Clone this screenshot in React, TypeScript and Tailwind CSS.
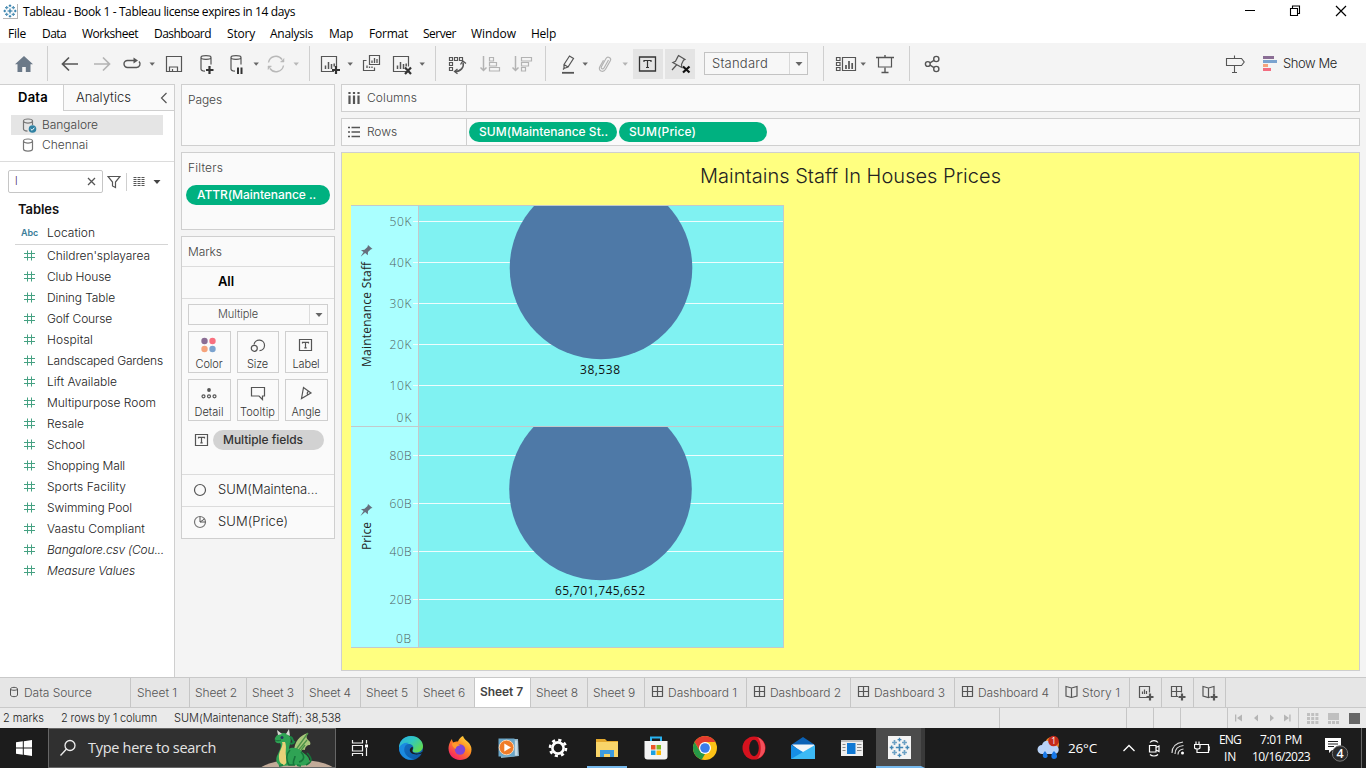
import React, { useLayoutEffect, useRef, useState } from "react";

/* Text set to a given width by adjusting its letter spacing. */
function Fit({ w, className = "", children }: { w: number; className?: string; children: string }) {
  const ref = useRef<HTMLSpanElement>(null);
  const [ls, setLs] = useState(0);
  useLayoutEffect(() => {
    if (!ref.current) return;
    const natural = ref.current.getBoundingClientRect().width - ls * children.length;
    setLs((w - natural) / children.length);
  }, [w, children]);
  return (
    <span ref={ref} className={"inline-block shrink-0 whitespace-pre " + className} style={{ letterSpacing: ls }}>
      {children}
    </span>
  );
}

type SvgProps = { w?: number; h?: number; className?: string; children: React.ReactNode };
function Svg({ w = 24, h = 24, className = "", children }: SvgProps) {
  return (
    <svg width={w} height={h} viewBox={`0 0 ${w} ${h}`} fill="none" stroke="#555" strokeWidth={1.2} className={"block shrink-0 " + className}>
      {children}
    </svg>
  );
}

function Caret({ className = "", color = "#666", big = false }: { className?: string; color?: string; big?: boolean }) {
  return (
    <svg width={8} height={8} viewBox="0 0 8 8" className={"block shrink-0 " + className}>
      <path d={big ? "M.5 2h7L4 6z" : "M1.5 2.5h5.4L4.2 5.7z"} fill={color} />
    </svg>
  );
}

const Divider = ({ className = "" }: { className?: string }) => <div className={"h-[35px] w-px shrink-0 bg-[#cfcfcf] " + className} />;

function TableauMark({ size, color }: { size: number; color: string }) {
  const plus = (x: number, y: number, r: number, w: number, o = 1) => (
    <path key={`${x}-${y}`} d={`M${x - r} ${y}h${2 * r}M${x} ${y - r}v${2 * r}`} strokeWidth={w} opacity={o} />
  );
  return (
    <svg width={size} height={size} viewBox="0 0 24 24" fill="none" stroke={color} className="block">
      {plus(12, 12, 4.2, 1.9)}
      {plus(12, 3, 2.2, 1.6)}
      {plus(12, 21, 2.2, 1.6)}
      {plus(3, 12, 2.2, 1.6)}
      {plus(21, 12, 2.2, 1.6)}
      {plus(6.3, 6.3, 2.8, 1.9, 0.75)}
      {plus(17.7, 6.3, 2.8, 1.9, 0.75)}
      {plus(6.3, 17.7, 2.8, 1.9, 0.75)}
      {plus(17.7, 17.7, 2.8, 1.9, 0.75)}
    </svg>
  );
}

function TitleBar() {
  return (
    <header className="flex h-[22px] shrink-0 items-center bg-white font-['Open_Sans','Noto_Sans',sans-serif] text-[12px] font-normal text-black">
      <div className="ml-[3px] flex h-[15px] w-[15px] items-center justify-center border-r border-b border-[#b5b5b5]">
        <TableauMark size={14} color="#1b6f9f" />
      </div>
      <Fit w={272} className="ml-[5px] pt-[2px]">Tableau - Book 1 - Tableau license expires in 14 days</Fit>
      <Svg w={102} h={20} className="mr-[19px] ml-auto">
        <path d="M0 9.500h10" stroke="#000" strokeWidth={1} />
        <path d="M45.500 7.500h7v7h-7zM47.500 7v-2h7v7.500h-2" stroke="#000" strokeWidth={1.1} />
        <path d="M91 5l10 10M101 5l-10 10" stroke="#000" strokeWidth={1.2} />
      </Svg>
    </header>
  );
}

function MenuBar() {
  return (
    <nav className="flex h-[21px] shrink-0 items-center bg-white pt-[2px] pl-[8px] font-['Open_Sans','Noto_Sans',sans-serif] text-[12px] font-normal text-black">
      <Fit w={18}>File</Fit>
      <Fit w={24} className="ml-[16px]">Data</Fit>
      <Fit w={56} className="ml-[16px]">Worksheet</Fit>
      <Fit w={57} className="ml-[16px]">Dashboard</Fit>
      <Fit w={28} className="ml-[16px]">Story</Fit>
      <Fit w={43} className="ml-[15px]">Analysis</Fit>
      <Fit w={24} className="ml-[16px]">Map</Fit>
      <Fit w={39} className="ml-[16px]">Format</Fit>
      <Fit w={33} className="ml-[15px]">Server</Fit>
      <Fit w={45} className="ml-[15px]">Window</Fit>
      <Fit w={25} className="ml-[15px]">Help</Fit>
    </nav>
  );
}

const Cylinder = () => <path d="M7 5.500c0-2.400 10-2.400 10 0s-10 2.400-10 0v11.500c0 1.200 1.500 2 4 2.200M17 5.500v7" />;
const ChartBox = () => (
  <>
    <path d="M16 19.500H3.500v-15h15v10" />
    <path d="M7.500 17v-3.500M10.500 17v-7M13.500 17v-5M16.200 14.500v-3" strokeWidth={1.5} />
  </>
);

function Toolbar() {
  return (
    <div className="flex h-[41px] shrink-0 items-center bg-[#f4f4f4]">
      <Svg className="ml-[12px]">
        <path d="M12 4l9 8.300h-2.500V20h-4.700v-5h-3.600v5H5.500v-7.700H3z" fill="#6b7988" stroke="none" />
      </Svg>
      <Divider className="ml-[11px]" />
      <Svg className="ml-[10px]">
        <path d="M20 12H5M11 5.500L4.500 12l6.500 6.500" strokeWidth={1.7} />
      </Svg>
      <Svg className="ml-[8px]">
        <path d="M4 12h15M13 5.500l6.500 6.500-6.500 6.500" stroke="#b3b3b3" strokeWidth={1.7} />
      </Svg>
      <Svg className="ml-[6px]">
        <path d="M14 8.500H7.500a3.500 3.500 0 000 7h9a3.500 3.500 0 002.500-6" strokeWidth={1.4} />
        <path d="M13.500 5.500L18 8.500l-4.500 3z" fill="#555" stroke="none" />
      </Svg>
      <Caret className="ml-[4px]" />
      <Svg className="ml-[6px]">
        <path d="M4.500 4.500h15v15h-15zM7.500 19.500v-4.500h8v4.500M10.500 19.500v-2.500" />
      </Svg>
      <Svg className="ml-[8px]">
        <Cylinder />
        <path d="M15.500 14v8M12 18h7.500" stroke="#333" strokeWidth={2.2} />
      </Svg>
      <Svg className="ml-[6px]">
        <Cylinder />
        <path d="M14 15.500v6.500M17.500 15.500v6.500" stroke="#333" strokeWidth={2} />
      </Svg>
      <Caret className="ml-[4px]" />
      <Svg className="ml-[4px]">
        <g stroke="#b8b8b8" strokeWidth={1.4}>
          <path d="M4.500 10.500a7.500 7.500 0 0113.500-3M19.500 13.500a7.500 7.500 0 01-13.500 3" />
          <path d="M16.500 10h3.500V6.500zM7.500 14H4v3.500z" fill="#b8b8b8" strokeWidth={0.5} />
        </g>
      </Svg>
      <Caret className="ml-[4px]" color="#b8b8b8" />
      <Divider className="ml-[9px]" />
      <Svg className="ml-[8px]">
        <ChartBox />
        <path d="M18 14v8M14 18h8" stroke="#333" strokeWidth={2.200} />
      </Svg>
      <Caret className="ml-[4px]" />
      <Svg className="ml-[5px]">
        <path d="M10.500 3.500h10v9h-10zM7.500 8.500h-3v10h11v-3" />
        <path d="M13 11V8.500M15.500 11V6M18 11V7M8 16v-2.500M10.500 16v-1.500M13 16v-1.500" strokeWidth={1.300} />
      </Svg>
      <Svg className="ml-[7px]">
        <ChartBox />
        <path d="M15 15.500l6 6.500M21 15.500L15 22" stroke="#333" strokeWidth={2.200} />
      </Svg>
      <Caret className="ml-[4px]" />
      <Divider className="ml-[9px]" />
      <Svg className="ml-[9px]">
        <path d="M4.500 5.500h3v3h-3zM9.500 5.500h3v3h-3zM14.500 5.500h3v3h-3zM4.500 10.500h3v3h-3zM4.500 15.500h3v3h-3z" />
        <path d="M18 10.500c1.500 5-2.500 9-8 9" strokeWidth={1.500} />
        <path d="M15.500 12.500l2.300-3.500 3.200 2.500M12.500 17L9.500 19.500l3 2.300" strokeWidth={1.300} />
      </Svg>
      <Svg className="ml-[9px]">
        <g stroke="#b3b3b3">
          <path d="M5.500 4v14M2.500 15.500l3 3 3-3" strokeWidth={1.500} />
          <path d="M11.500 5.500h4v3.500h-4zM11.500 10.500h7v3.500h-7zM11.500 15.500h10v3.500h-10z" />
        </g>
      </Svg>
      <Svg className="ml-[8px]">
        <g stroke="#b3b3b3">
          <path d="M5.500 4v14M2.500 15.500l3 3 3-3" strokeWidth={1.500} />
          <path d="M11.500 5.500h10v3.500h-10zM11.500 10.500h7v3.500h-7zM11.500 15.500h4v3.500h-4z" />
        </g>
      </Svg>
      <Divider className="ml-[11px]" />
      <Svg className="ml-[10px]">
        <path d="M8 12.500l5.500-8.500 4 2.500-5.500 8.500-4 1.500zM8 12.500l4 2.500M7 17.500l1-1" />
        <path d="M6 20.800h12" strokeWidth={1.800} />
      </Svg>
      <Caret className="ml-px" />
      <Svg className="ml-[4px]">
        <path d="M15.500 8l-4.500 8c-1 1.800-3.600.500-2.600-1.300L13 6.500c1.600-2.700 5.800-.8 4.300 2.300l-4.800 8.500c-2.400 4-7.700 1.300-5.700-2.500l3.700-6.500" stroke="#b3b3b3" />
      </Svg>
      <Caret className="ml-[4px]" color="#b3b3b3" />
      <div className="ml-[4px] flex h-[30px] w-[30px] shrink-0 items-center justify-center bg-[#e4e4e4]">
        <Svg w={20} h={20}>
          <path d="M1.500 3h16v14h-16z" stroke="#333" strokeWidth={1.300} />
          <path d="M6 8V6.500h7V8M9.500 6.500v7M8 13.500h3" stroke="#333" />
        </Svg>
      </div>
      <div className="ml-[2px] flex h-[30px] w-[30px] shrink-0 items-center justify-center bg-[#e4e4e4]">
        <Svg>
          <path d="M10.500 3.500l6.500 4-1.500.800-2 4 .3 3.200-9-5 2.700-1.300 2-3.800zM8.500 13L4 18" />
          <path d="M15 14.500l6.500 6M21.500 14.500l-6.500 6" stroke="#111" strokeWidth={2.200} />
        </Svg>
      </div>
      <div className="ml-[9px] flex h-[23px] w-[104px] shrink-0 items-center border border-[#c3c3c3] bg-[#f7f7f7]">
        <Fit w={56} className="ml-[7px] text-[13px] leading-none text-[#444]">Standard</Fit>
        <div className="ml-auto flex h-full w-[18px] items-center justify-center border-l border-[#d8d8d8]">
          <Caret big />
        </div>
      </div>
      <div className="ml-[15px] h-[35px] w-px shrink-0 bg-[#cfcfcf]" />
      <Svg className="ml-[10px]">
        <path d="M2.500 5.500h3.500v3h-3.500zM2.500 10.500h3.500v3h-3.500zM2.500 15.500h3.500v3h-3.500zM8.500 5.500h13v13h-13z" />
        <path d="M12 17v-4M15 17V9M18.200 17v-6" strokeWidth={1.700} />
      </Svg>
      <Caret className="ml-px" />
      <Svg className="ml-[6px]">
        <path d="M3 5.500h18M12 3v2.500M12 15.500v5M8.500 20.500h7" strokeWidth={1.400} />
        <path d="M5.500 5.500v9.500h13V5.500" />
      </Svg>
      <Divider className="ml-[12px]" />
      <Svg className="ml-[10px]">
        <g strokeWidth={1.400}>
          <circle cx="7.800" cy="12" r="2.400" />
          <circle cx="16.300" cy="7" r="2.600" />
          <circle cx="16.300" cy="17" r="2.600" />
          <path d="M10 10.800l4-2.400M10 13.200l4 2.400" />
        </g>
      </Svg>
      <Svg className="ml-auto">
        <path d="M3.500 6.500h15l2.700 3.500-2.700 3.500h-15zM11.500 3.500v3M11.500 13.500v7M9 20.500h5" strokeWidth={1.100} />
      </Svg>
      <Svg w={14} h={16} className="ml-[16px]">
        <g stroke="none">
          <path d="M0 0h11v3H0z" fill="#8a6d94" />
          <path d="M0 4h14v3H0z" fill="#7ba3cf" />
          <path d="M0 8h5v3H0z" fill="#f5a37c" />
          <path d="M0 12h8v3H0z" fill="#f36d80" />
        </g>
      </Svg>
      <Fit w={54} className="mr-[29px] ml-[6px] text-[13px] text-[#222]">Show Me</Fit>
    </div>
  );
}

const fields: [string, number, boolean?][] = [
  ["Children'splayarea", 103], ["Club House", 64], ["Dining Table", 68], ["Golf Course", 65],
  ["Hospital", 46], ["Landscaped Gardens", 116], ["Lift Available", 70], ["Multipurpose Room", 109],
  ["Resale", 37], ["School", 38], ["Shopping Mall", 78], ["Sports Facility", 79],
  ["Swimming Pool", 85], ["Vaastu Compliant", 98], ["Bangalore.csv (Cou...", 117, true], ["Measure Values", 88, true],
];

function DataPane() {
  return (
    <aside className="flex w-[175px] shrink-0 flex-col border-t border-r border-[#cfcfcf] bg-white text-[12px] text-[#222]">
      <div className="flex h-[26px] shrink-0">
        <div className="flex w-[63px] items-center pl-[18px] text-[13px] font-semibold text-black">
          <Fit w={30}>Data</Fit>
        </div>
        <div className="flex flex-1 items-center border-b border-l border-[#cfcfcf] bg-[#fafafa] pl-[12px] text-[13px]">
          <Fit w={55}>Analytics</Fit>
          <Svg w={8} h={12} className="ml-[29px]">
            <path d="M6.500 1L1.500 6l5 5" />
          </Svg>
        </div>
      </div>
      <div className="mt-[4px] ml-[11px] flex h-[20px] w-[152px] shrink-0 items-center bg-[#e5e5e5] pl-[11px] text-[#444]">
        <Svg w={15} h={16}>
          <path d="M1.500 4c0-2.700 9-2.700 9 0s-9 2.700-9 0v8c0 1.500 2 2 4 2.200M10.500 4v4" stroke="#777" />
          <circle cx="10.500" cy="12" r="3.800" fill="#3182a3" stroke="none" />
          <path d="M8.700 12l1.400 1.300 2.300-2.600" stroke="#fff" strokeWidth={1} />
        </Svg>
        <Fit w={56} className="ml-[5px]">Bangalore</Fit>
      </div>
      <div className="flex h-[20px] shrink-0 items-center pl-[22px] text-[#444]">
        <Svg w={15} h={16}>
          <path d="M1.500 4c0-2.700 9-2.700 9 0s-9 2.700-9 0v8c0 2.700 9 2.700 9 0V4" stroke="#777" />
        </Svg>
        <Fit w={46} className="ml-[5px]">Chennai</Fit>
      </div>
      <div className="mt-[6px] h-px shrink-0 bg-[#dcdcdc]" />
      <div className="mt-[8px] ml-[8px] flex h-[23px] shrink-0 items-center">
        <div className="flex h-[23px] w-[95px] items-center rounded-[2px] border border-[#c6c6c6] pl-[6px]">
          <span className="text-[11px] text-[#4a2a6d]">l</span>
          <Svg w={9} h={9} className="mr-[6px] ml-auto">
            <path d="M1 1l7 7M8 1L1 8" strokeWidth={1.300} />
          </Svg>
        </div>
        <Svg w={14} h={14} className="ml-[4px]">
          <path d="M1 1.500h12L8.500 7v5.500l-3-1.500V7z" />
        </Svg>
        <div className="ml-[5px] h-[18px] w-px bg-[#cfcfcf]" />
        <Svg w={13} h={10} className="ml-[6px]">
          <path d="M.5 .5h12M.5 2.500h12M.5 4.500h12M.5 6.500h12M.5 8.500h12" strokeWidth={1} strokeDasharray="3 1" />
        </Svg>
        <Caret className="ml-[7px]" color="#444" big />
      </div>
      <div className="mt-[7px] flex h-[20px] shrink-0 items-center pl-[18px] text-[13px] font-semibold text-[#111]">
        <Fit w={41}>Tables</Fit>
      </div>
      <div className="mt-[2px] mr-[6px] ml-[15px] flex h-[23px] shrink-0 items-center border-b border-[#d5d5d5] pl-[6px]">
        <Fit w={17} className="text-[9px] font-semibold text-[#3c7d99]">Abc</Fit>
        <Fit w={48} className="ml-[9px]">Location</Fit>
      </div>
      <ul className="flex flex-col">
        {fields.map(([name, w, italic]) => (
          <li key={name} className="flex h-[21px] items-center pl-[24px]">
            <Svg w={11} h={11}>
              <path d="M3.500 .5v10M7.500 .5v10M0 3.500h11M0 7.500h11" stroke="#45a182" strokeWidth={1} />
            </Svg>
            <Fit w={w} className={italic ? "ml-[12px] italic" : "ml-[12px]"}>{name}</Fit>
          </li>
        ))}
      </ul>
    </aside>
  );
}

const LabelIcon = () => (
  <>
    <path d="M2.500 3.500h12v11h-12z" />
    <path d="M5.500 7.500v-1.200h6v1.200M8.500 6.300v5.500M7.300 11.800h2.400" />
  </>
);

const markButtons: { label: string; w: number; icon: React.ReactNode }[] = [
  {
    label: "Color", w: 27,
    icon: (
      <g stroke="none">
        <circle cx="4.500" cy="5" r="3.200" fill="#8a6d94" />
        <circle cx="12.500" cy="5" r="3.200" fill="#f9707f" />
        <circle cx="4.500" cy="13" r="3.200" fill="#f5a37c" />
        <circle cx="12.500" cy="13" r="3.200" fill="#7ba3cf" />
      </g>
    ),
  },
  { label: "Size", w: 21, icon: (<><path d="M5 8.500a5.300 5.300 0 115.500 6.200" /><path d="M5 9.300a5 5 0 015-6.500 5.200 5.200 0 01-1.700 10.200" stroke="none" /><circle cx="5.300" cy="12.300" r="3" /></>) },
  { label: "Label", w: 27, icon: <LabelIcon /> },
  {
    label: "Detail", w: 29,
    icon: (
      <>
        <circle cx="9" cy="6" r="1.900" fill="#555" stroke="none" />
        <circle cx="3.500" cy="12.300" r="1.500" /><circle cx="9" cy="12.300" r="1.500" /><circle cx="14.500" cy="12.300" r="1.500" />
      </>
    ),
  },
  { label: "Tooltip", w: 35, icon: <path d="M2.500 3.500h13v8.500h-2v3.500L10 12H2.500z" /> },
  { label: "Angle", w: 29, icon: <path d="M4.500 14.500L6.500 3.500l7.500 5.500zM11 11.300c-1.200-1.500-1-3 .5-4" /> },
];

function Cards() {
  const card = "flex flex-col shrink-0 border border-[#cfcfcf] bg-[#fafafa]";
  return (
    <div className="ml-[6px] flex w-[154px] shrink-0 flex-col text-[12px] text-[#444]">
      <section className={card + " h-[62px] pt-[7px] pl-[6px]"}>
        <Fit w={34} className="self-start leading-[16px]">Pages</Fit>
      </section>
      <section className={card + " mt-[6px] h-[78px] pt-[7px] pl-[4px]"}>
        <Fit w={35} className="ml-[2px] self-start leading-[16px]">Filters</Fit>
        <div className="mt-[9px] flex h-[20px] w-[144px] items-center rounded-full bg-[#00b180] pl-[11px] font-medium text-white">
          <Fit w={119}>ATTR(Maintenance ..</Fit>
        </div>
      </section>
      <section className={card + " mt-[6px] h-[303px]"}>
        <div className="flex h-[30px] items-center border-b border-[#dcdcdc] pl-[6px]">
          <Fit w={34}>Marks</Fit>
        </div>
        <div className="flex h-[32px] items-center border-b border-[#dcdcdc] pb-[2px] pl-[36px] text-[13px] font-semibold text-black">
          <Fit w={16}>All</Fit>
        </div>
        <div className="mt-[5px] ml-[6px] flex h-[21px] w-[140px] shrink-0 items-center border border-[#cfcfcf] pl-[29px] text-[11px]">
          <Fit w={40}>Multiple</Fit>
          <div className="ml-auto flex h-full w-[18px] items-center justify-center border-l border-[#dcdcdc]"><Caret big /></div>
        </div>
        <div className="mt-[6px] ml-[6px] grid w-[140px] grid-cols-[43px_42px_43px] gap-[6px] text-[11px] text-[#333]">
          {markButtons.map((b) => (
            <div key={b.label} className="flex h-[42px] flex-col items-center border border-[#cfcfcf] pt-[4px] pr-px">
              <Svg w={18} h={18}>{b.icon}</Svg>
              <Fit w={b.w} className="mt-[3px] leading-[14px]">{b.label}</Fit>
            </div>
          ))}
        </div>
        <div className="mt-[9px] flex h-[20px] shrink-0 items-center pl-[11px]">
          <Svg w={18} h={18}><LabelIcon /></Svg>
          <div className="ml-[2px] flex h-[20px] w-[111px] items-center rounded-full bg-[#d2d2d2] pl-[10px] font-medium text-[#333]">
            <Fit w={80}>Multiple fields</Fit>
          </div>
        </div>
        <div className="mt-auto flex h-[32px] shrink-0 items-center border-t border-[#dcdcdc] pb-px pl-[10px] text-[13px] text-[#222]">
          <Svg w={16} h={16}><circle cx="8" cy="8" r="5.500" /></Svg>
          <Fit w={100} className="ml-[10px]">SUM(Maintena...</Fit>
        </div>
        <div className="flex h-[32px] shrink-0 items-center border-t border-[#dcdcdc] pb-px pl-[10px] text-[13px] text-[#222]">
          <Svg w={16} h={16}>
            <circle cx="8" cy="8" r="5.500" stroke="#777" />
            <path d="M8 2.500V8l4.500-3M8 8h5.500" strokeWidth={1} />
          </Svg>
          <Fit w={70} className="ml-[10px]">SUM(Price)</Fit>
        </div>
      </section>
    </div>
  );
}

const axisText = { fontFamily: "'Open Sans', 'Noto Sans', sans-serif", fontSize: 12 };

function Chart() {
  const pin = "M9 0.500l4.500 4-1.500.300-3 2.700-.200 3.200-2.700-2.200-4.700 4 3.200-5-2.700-1.800 3.600-.500 3-2.700z";
  const upper: [string, number][] = [["50K", 16], ["40K", 57], ["30K", 98], ["20K", 139], ["10K", 180]];
  const lower: [string, number][] = [["80B", 250], ["60B", 298], ["40B", 346], ["20B", 394]];
  return (
    <svg width={434} height={443} viewBox="0 0 434 443" className="block" style={axisText}>
      <defs>
        <clipPath id="topPane"><rect x="68" y="1" width="365" height="220" /></clipPath>
        <clipPath id="bottomPane"><rect x="68" y="222" width="365" height="220" /></clipPath>
      </defs>
      <rect width="68" height="443" fill="#aaffff" />
      <rect x="67" width="366" height="443" fill="#80f2f2" />
      {[...upper, ...lower].map(([t, y]) => (
        <g key={t}>
          <path d={`M62 ${y + 0.500}H433`} stroke="#effdfd" />
          <text x="38.500" y={y + 5} textLength="22" fill="#4f6060">{t}</text>
        </g>
      ))}
      <text x="45.500" y="217" textLength="15" fill="#4f6060">0K</text>
      <text x="45" y="438" textLength="15" fill="#4f6060">0B</text>
      <g fill="#4e79a7">
        <circle cx="250" cy="63" r="91.300" clipPath="url(#topPane)" />
        <circle cx="249.500" cy="284" r="91.300" clipPath="url(#bottomPane)" />
      </g>
      <path d="M0 .5H433M0 221.500H433M0 442.500H433M67.500 0V443M432.500 0V443" stroke="#c3c9cb" />
      <g fontWeight="400">
        <text x="229" y="169" textLength="40" fill="#111">38,538</text>
        <text x="204" y="390" textLength="90" fill="#111">65,701,745,652</text>
        <text transform="translate(20 162) rotate(-90)" textLength="105" fill="#222">Maintenance Staff</text>
        <text transform="translate(20 345) rotate(-90)" textLength="28" fill="#222">Price</text>
      </g>
      <path transform="translate(8 39.500)" d={pin} fill="#666f7d" />
      <path transform="translate(8 298.500)" d={pin} fill="#666f7d" />
    </svg>
  );
}

function Shelf({ icon, label, w, children }: { icon: React.ReactNode; label: string; w: number; children?: React.ReactNode }) {
  return (
    <div className="flex h-[28px] shrink-0 items-center border border-[#cfcfcf] bg-[#fafafa] text-[12px]">
      <div className="flex h-full w-[125px] items-center border-r border-[#cfcfcf] pl-[6px] text-[#444]">
        <Svg w={12} h={12}>{icon}</Svg>
        <Fit w={w} className="ml-[7px]">{label}</Fit>
      </div>
      {children}
    </div>
  );
}

function Worksheet() {
  const pill = "ml-[2px] flex h-[20px] w-[148px] items-center rounded-full bg-[#00b180] pl-[10px] font-medium text-white";
  return (
    <main className="ml-[6px] flex w-[1019px] shrink-0 flex-col">
      <Shelf label="Columns" w={50} icon={<path d="M1.500 0v2M6 0v2M10.500 0v2M1.500 3.500v8.500M6 3.500v8.500M10.500 3.500v8.500" strokeWidth={2.200} />} />
      <div className="h-[6px] shrink-0" />
      <Shelf label="Rows" w={30} icon={<path d="M0 1.500h2M0 6h2M0 10.500h2M3.500 1.500H12M3.500 6H12M3.500 10.500H12" strokeWidth={1.600} />}>
        <div className={pill}><Fit w={129}>SUM(Maintenance St..</Fit></div>
        <div className={pill}><Fit w={67}>SUM(Price)</Fit></div>
      </Shelf>
      <div className="mt-[6px] flex h-[519px] flex-col border border-[#cfcfcf] bg-[#ffff80]">
        <div className="flex h-[52px] shrink-0 items-center justify-center pb-[6px]">
          <Fit w={301} className="text-[20px] text-[#222]">Maintains Staff In Houses Prices</Fit>
        </div>
        <div className="pl-[9px]"><Chart /></div>
      </div>
    </main>
  );
}

const GridIcon = () => <path d="M1.500 1.500h10v10h-10zM6.500 1.500v10M1.500 6.500h10" />;
const BookIcon = () => <path d="M6.500 2.500v10M1 1.500l5.500 1.500L12 1.500v9.500l-5.500 1.500L1 11z" />;

function SheetTabs() {
  const tab = "flex h-full shrink-0 items-center border-r border-[#c6c6c6] ";
  const sheets = [1, 2, 3, 4, 5, 6, 7, 8, 9];
  return (
    <div className="flex h-[31px] shrink-0 border-t border-b border-[#c9c9c9] bg-[#e6e6e6] text-[12px] text-[#555]">
      <div className={tab + "w-[131px] pl-[9px]"}>
        <Svg w={10} h={12} className="mb-[2px]"><path d="M1.500 3c0-2.200 7-2.200 7 0v6c0 2.200-7 2.200-7 0zM1.500 3c0 1.700 7 1.700 7 0" strokeWidth={1} /></Svg>
        <Fit w={68} className="ml-[5px]">Data Source</Fit>
      </div>
      {sheets.map((n) => (
        <div key={n} className={tab + (n === 1 ? "w-[59px] pl-[6px]" : n === 7 ? "w-[56px] bg-white pb-[2px] pl-[5px] font-semibold text-[#444]" : "w-[57px] pl-[5px]")}>
          <Fit w={n === 7 ? 43 : n === 1 ? 40 : 42}>{"Sheet " + n}</Fit>
        </div>
      ))}
      {[1, 2, 3, 4].map((n) => (
        <div key={n} className={tab + (n === 1 ? "w-[102px] pl-[6px]" : "w-[104px] pl-[6px]")}>
          <Svg w={13} h={13} className="mb-[3px]"><GridIcon /></Svg>
          <Fit w={n === 1 ? 69 : 71} className="ml-[4px]">{"Dashboard " + n}</Fit>
        </div>
      ))}
      <div className={tab + "w-[71px] pl-[6px]"}>
        <Svg w={13} h={14} className="mb-[2px]"><BookIcon /></Svg>
        <Fit w={38} className="ml-[4px]">Story 1</Fit>
      </div>
      {["sheet", "dashboard", "story"].map((kind) => (
        <div key={kind} className={tab + "w-[32px] pl-[8px]"}>
          <Svg w={17} h={17} className="mt-[2px]">
            {kind === "sheet" && <path d="M9 12.500H1.500v-11h10v6M4.500 9V6.500M6.500 9V4.500M8.500 9V6" />}
            {kind === "dashboard" && <path d="M8 11.500H1.500v-10h10v6M6.500 1.500v10M1.500 6.500h10" />}
            {kind === "story" && <path d="M6.500 3v10M8 12l-1.500.500L1 11V1.500L6.500 3 12 1.500V8" />}
            <path d="M12 8.500v7M8.500 12h7" strokeWidth={2.200} />
          </Svg>
        </div>
      ))}
    </div>
  );
}

function StatusBar() {
  const cell = "h-full border-l border-[#c6c6c6] ";
  return (
    <div className="flex h-[20px] shrink-0 items-center bg-[#eaeaea] text-[11px] text-[#222]">
      <Fit w={41} className="ml-[3px]">2 marks</Fit>
      <Fit w={96} className="ml-[17px]">2 rows by 1 column</Fit>
      <Fit w={167} className="ml-[17px]">SUM(Maintenance Staff): 38,538</Fit>
      <div className={cell + "ml-auto w-[127px]"} />
      <div className={cell + "w-[27px]"} />
      <div className={cell + "w-[27px]"} />
      <div className={cell + "w-[47px]"} />
      <div className={cell + "flex w-[71px] items-center"}>
        <Svg w={56} h={8} className="ml-[7px]">
          <g fill="#b5b5b5" stroke="none">
            <path d="M0 .5h1.300v7H0zM7 .5v7L2 4zM23 .5v7L19 4zM35 .5v7L39 4zM49 .5v7L54 4zM54.300 .5h1.300v7h-1.300z" />
          </g>
        </Svg>
      </div>
      <div className={cell + "flex w-[68px] items-center pl-[8px]"}>
        <Svg w={54} h={12}>
          <g stroke="none" fill="#c0c0c0">
            <path d="M0 1h3v3H0zM4.200 1h3v3h-3zM8.400 1h3v3h-3zM0 5h3v3H0zM4.200 5h3v3h-3zM8.400 5h3v3h-3zM0 9h3v3H0zM4.200 9h3v3h-3zM8.400 9h3v3h-3zM21 1h11v7H21zM21 9h3v3h-3zM25 9h3v3h-3zM29 9h3v3h-3z" />
            <path d="M42 1h11v11H42z" fill="#666" />
          </g>
        </Svg>
      </div>
    </div>
  );
}

function Dragon() {
  return (
    <Svg w={76} h={38}>
      <g stroke="none">
        <ellipse cx="38" cy="42" rx="38" ry="11" fill="#c2ab99" />
        <path d="M35 23c0-10 6-17 14-19-2 3-2 5 0 7 2 1 3 3 2 5-3 0-5 2-5 5-3-1-5 1-5 4z" fill="#a9c77b" />
        <path d="M36 22l13-18M38 23l10-12M40 24l6-8" stroke="#4e9448" strokeWidth={1.300} />
        <path d="M16 9c3-6 12-7 15-1 2 5-1 8-1 12 2-2 8-2 12 2 5 4 9 6 8 11-1 4-6 4-11 3l-18 1c-4-3-5-7-2-12 2-5 4-8 2-11-3 1-6-1-5-5z" fill="#2fa354" />
        <path d="M23 13c2 4-4 10-3 16 0 4 2 6 5 7 3-1 3-5 2-9-1-5 1-9-1-14z" fill="#e8d178" />
        <path d="M19 6l-1-5 5 4M27 5l3-5 1 7" fill="#d9dbd5" />
        <path d="M31 21c-4 4-4 10-1 15h5c-2-4 1-6 1-9M42 23c5 5 2 9-2 10M48 24c6 6 5 9-1 12" stroke="#16753a" strokeWidth={1.600} />
        <path d="M31 8c3 0 2 4 4 5-1 2-3 2-4 1M24 36l-4 1M38 36l4 1" stroke="#1b8644" strokeWidth={2} />
        <circle cx="23" cy="8.500" r="1.500" fill="#25365d" />
        <path d="M16 11c2 1 4 1 6 0" stroke="#19703a" strokeWidth={1} />
      </g>
    </Svg>
  );
}

const apps: { name: string; state?: "open" | "active"; icon: React.ReactNode }[] = [
  {
    name: "edge",
    icon: (
      <>
        <defs>
          <linearGradient id="eg" x1="0" y1="0" x2="1" y2=".7"><stop offset="0" stopColor="#2bb0e6" /><stop offset=".5" stopColor="#31c8c0" /><stop offset="1" stopColor="#63dc4b" /></linearGradient>
          <linearGradient id="eb" x1="0" y1="0" x2="1" y2="1"><stop offset="0" stopColor="#1473cb" /><stop offset="1" stopColor="#0c59a4" /></linearGradient>
        </defs>
        <circle cx="13" cy="13" r="12" fill="url(#eb)" />
        <path d="M1 13C1 6 6 1 13 1s12 5 12 10c0 4-3 6.500-6.500 6.500-4 0-4.500-1.500-3.500-3 1.500-3-1-5.500-4-5.500-4 0-8 1-10 4z" fill="url(#eg)" />
        <path d="M1 13c1.500-4 6-6 10-5-4 1-6 6-4 10 2 4 6 6 10 6C8 27 1 20 1 13z" fill="#1b8be0" />
        <path d="M14.800 14c-1.500 3 1 4.500 4 4.500 2 0 3.500-.5 5-1.500h2v1h-1c-7 3-13 1-13-3 0-1 1-3 3-3z" fill="#1c1c1c" />
      </>
    ),
  },
  {
    name: "firefox",
    icon: (
      <>
        <defs><linearGradient id="ff" x1=".9" y1="0" x2=".2" y2="1"><stop offset="0" stopColor="#ffe943" /><stop offset=".45" stopColor="#ff8a21" /><stop offset="1" stopColor="#f5156c" /></linearGradient></defs>
        <path d="M16 1c1 3 3 4 5 6 2 2 3.500 4.500 3.500 7.500C24.500 21 19.500 25 13 25S1.500 20 1.500 13.500C1.500 9 4 5 5 4c0 1.500.500 2.500 1.500 3.500C8 6.500 10 6.300 11 6.500c1-3 3-4.500 5-5.500z" fill="url(#ff)" />
        <circle cx="13" cy="14.500" r="5.200" fill="#8145d8" />
        <path d="M5 8.500c3-1 6 0 8 2-2 0-4 1-4.500 3.500C6.500 13 5 11 5 8.500z" fill="#ff9a2c" />
      </>
    ),
  },
  {
    name: "media",
    icon: (
      <>
        <path d="M5 4h17l1 17-18 2z" fill="#8fb4c8" />
        <path d="M2.500 3.500h16v18h-16z" fill="#6aa7c9" />
        <path d="M19 5.500h2.500v15H19z" fill="#c7dbe5" />
        <circle cx="10.500" cy="12.500" r="7.300" fill="#f07c28" stroke="#f9d5b4" strokeWidth={1} />
        <path d="M8.300 8.500v8l6.700-4z" fill="#fff" />
      </>
    ),
  },
  {
    name: "settings",
    icon: (
      <>
        <circle cx="13" cy="13" r="5.600" stroke="#fff" strokeWidth={2.600} />
        <circle cx="13" cy="13" r="8" stroke="#fff" strokeWidth={2.600} strokeDasharray="3.140 3.140" />
      </>
    ),
  },
  {
    name: "explorer", state: "open",
    icon: (
      <>
        <path d="M2 4h9l2 2h11v16H2z" fill="#e4a92d" />
        <path d="M2 7h22v15H2z" fill="#f9d569" />
        <path d="M6 15h14v7h-4v-3h-6v3H6z" fill="#3d9be0" />
      </>
    ),
  },
  {
    name: "store",
    icon: (
      <>
        <path d="M8 6V2.500h10V6" stroke="#28b2f0" strokeWidth={2} />
        <path d="M1.500 6h23v15.500c0 2-1 3-3 3h-17c-2 0-3-1-3-3z" fill="#f4f4f4" stroke="none" />
        <g stroke="none">
          <path d="M8 10h4.500v4.500H8z" fill="#ee5527" /><path d="M13.500 10H18v4.500h-4.500z" fill="#7fba22" />
          <path d="M8 15.500h4.500V20H8z" fill="#1ba1e2" /><path d="M13.500 15.500H18V20h-4.500z" fill="#ffb901" />
        </g>
      </>
    ),
  },
  {
    name: "chrome",
    icon: (
      <>
        <circle cx="13" cy="13" r="12" fill="#fbc116" />
        <path d="M2.600 7A12 12 0 0123.400 7H13L8 16z" fill="#e33b2e" />
        <path d="M2.600 7l5.200 9 5.200 3-3.200 5.600A12 12 0 012.600 7z" fill="#279847" />
        <circle cx="13" cy="13" r="6" fill="#fff" /><circle cx="13" cy="13" r="4.800" fill="#3a7cec" />
      </>
    ),
  },
  {
    name: "opera",
    icon: (
      <>
        <circle cx="13" cy="13" r="11.500" fill="#d5121e" />
        <path d="M16 2a11.500 11.500 0 010 22c5-3 5-19 0-22z" fill="#f2505b" />
        <ellipse cx="13" cy="13" rx="4.800" ry="8.300" fill="#1c1c1c" />
      </>
    ),
  },
  {
    name: "mail",
    icon: (
      <>
        <path d="M1 10L13 2l12 8v6H1z" fill="#0b61b5" />
        <path d="M2 9.500h22v6l-11 3z" fill="#f2f5f8" />
        <path d="M1 10l24 14H1z" fill="#168ee6" /><path d="M25 10v14H1l12-7z" fill="#3cb9f5" />
      </>
    ),
  },
  {
    name: "reader",
    icon: (
      <>
        <path d="M2 5h22v16H2z" fill="#eeeeee" /><path d="M2 5h22v2H2z" fill="#bdbdbd" />
        <path d="M8 8h8.500v11H8z" fill="#0f78d4" />
        <path d="M3.500 9.500h3M3.500 12.500h3M3.500 15.500h3M18 9.500h4.500M18 12.500h4.500M18 15.500h4.500" stroke="#888" strokeWidth={1} />
      </>
    ),
  },
];

function Taskbar() {
  return (
    <footer className="flex h-[40px] shrink-0 items-center bg-[#1c1c1c] font-['Open_Sans','Noto_Sans',sans-serif] font-normal text-white">
      <Svg w={16} h={16} className="ml-[16px]">
        <path d="M0 2.300l6.800-1v6.200H0zM7.800 1.200L16 0v7.500H7.800zM0 8.500h6.800v6.200l-6.800-1zM7.800 8.500H16V16l-8.200-1.200z" fill="#fff" stroke="none" />
      </Svg>
      <div className="ml-[16px] flex h-full w-[288px] shrink-0 items-center border border-[#666] bg-[#303030]">
        <Svg w={18} h={18} className="ml-[10px]">
          <circle cx="11" cy="6.500" r="5" stroke="#eee" strokeWidth={1.300} /><path d="M7.500 10L1.500 16.500" stroke="#eee" strokeWidth={1.300} />
        </Svg>
        <Fit w={128} className="ml-[11px] text-[14.5px] text-[#e4e4e4]">Type here to search</Fit>
        <div className="ml-auto"><Dragon /></div>
      </div>
      <Svg w={17} h={16} className="ml-[15px]">
        <path d="M1.500 0v3h10V0M1.500 5.500h10v5.500h-10zM1.500 16v-2.500h10V16M15.500 0v3.500M15.500 8v8" stroke="#f0f0f0" />
        <path d="M14 4.500h3v3h-3z" fill="#fff" stroke="none" />
      </Svg>
      <div className="ml-[18px] flex h-full">
        {apps.map((a) => (
          <div key={a.name} className="flex h-full w-[49px] flex-col items-center justify-between pt-[7px]">
            <Svg w={26} h={26}><g stroke={a.name === "settings" || a.name === "store" ? undefined : "none"}>{a.icon}</g></Svg>
            {a.state === "open" && <div className="h-[2px] w-[40px] bg-[#76b9ed]" />}
          </div>
        ))}
        <div className="flex h-full w-[49px] flex-col items-center border-r-[4px] border-b-2 border-[#3a3a3a] border-b-[#76b9ed] bg-[#4b4b4b] pt-[8px] pl-[2px]">
          <div className="flex h-[23px] w-[23px] items-center justify-center bg-[#f4f4f4]"><TableauMark size={21} color="#4287b5" /></div>
        </div>
      </div>
      <div className="ml-auto flex h-full items-center">
        <Svg w={24} h={26}>
          <g stroke="none">
            <circle cx="15" cy="9" r="7" fill="#ee8a28" />
            <path d="M5 19a4.500 4.500 0 010-9c1-5 9-6 11 0 7-1 8 9 1 9z" fill="#b9d3f7" />
            <path d="M8 16c4 5 3 7 0 7s-3-4 0-7zM17 16c5 5 3 8 0 8s-4-4 0-8z" fill="#1777e6" />
            <circle cx="16.500" cy="6" r="5.300" fill="#c42b1c" />
          </g>
          <text x="14.300" y="9" fontSize="8.500" fill="#fff" stroke="none" fontFamily="Open Sans">1</text>
        </Svg>
        <Fit w={29} className="ml-[7px] text-[13.5px]">26°C</Fit>
        <Svg w={12} h={8} className="ml-[26px]"><path d="M.5 7L6 1.500 11.500 7" stroke="#fff" strokeWidth={1.300} /></Svg>
        <Svg w={12} h={18} className="ml-[13px]">
          <path d="M1.500 6.500h6.500v6.500H1.500zM8 8.500l3-1.500v5.500L8 11M2 3.500C4 1 8 1 10 3.500M2 15.500c2 2 6 2 8 0" stroke="#fff" />
        </Svg>
        <Svg w={14} h={14} className="ml-[11px]">
          <g stroke="#ddd"><path d="M1 12C1 6 5 2 12 1M4 13c0-5 3-8 8.500-8.500M7 13.500c0-3 2-5 5.500-5.500" /></g>
          <circle cx="11.500" cy="12" r="1.500" fill="#fff" stroke="none" />
        </Svg>
        <Svg w={16} h={14} className="ml-[9px]">
          <path d="M5 3.500h9.500v8H5.500M14.500 6H16v3h-1.500M2 .5v3M5 .5v3M.5 3.500h5.500v3c0 2-5.500 2-5.500 0zM3 8v3.500h3" stroke="#fff" />
        </Svg>
        <div className="ml-[9px] flex w-[22px] flex-col items-center text-[12px] leading-[17px]">
          <Fit w={22}>ENG</Fit><Fit w={12}>IN</Fit>
        </div>
        <div className="ml-[11px] flex w-[58px] flex-col items-center text-[12px] leading-[17px]">
          <Fit w={42}>7:01 PM</Fit><Fit w={58}>10/16/2023</Fit>
        </div>
        <Svg w={26} h={28} className="mt-[4px] ml-[14px]">
          <path d="M1 2h16v12H8l-3 3v-3H1z" fill="#fff" stroke="none" />
          <path d="M4 5.500h10M4 8h10M4 10.500h6" stroke="#222" strokeWidth={1} />
          <circle cx="16" cy="17.500" r="7.700" fill="#2b2b2b" stroke="#777" strokeWidth={1} />
          <text x="12.500" y="22" fontSize="12.500" fontWeight="600" fill="#fff" stroke="none" fontFamily="Open Sans">4</text>
        </Svg>
        <div className="ml-[11px] h-full w-px bg-[#666]" />
        <div className="w-[4px]" />
      </div>
    </footer>
  );
}

export default function App() {
  return (
    <div className="flex h-[768px] w-[1366px] flex-col overflow-hidden bg-[#f4f4f4] font-['Inter',sans-serif] font-light">
      <TitleBar />
      <MenuBar />
      <Toolbar />
      <div className="flex h-[593px] shrink-0">
        <DataPane />
        <Cards />
        <Worksheet />
      </div>
      <SheetTabs />
      <StatusBar />
      <Taskbar />
    </div>
  );
}
